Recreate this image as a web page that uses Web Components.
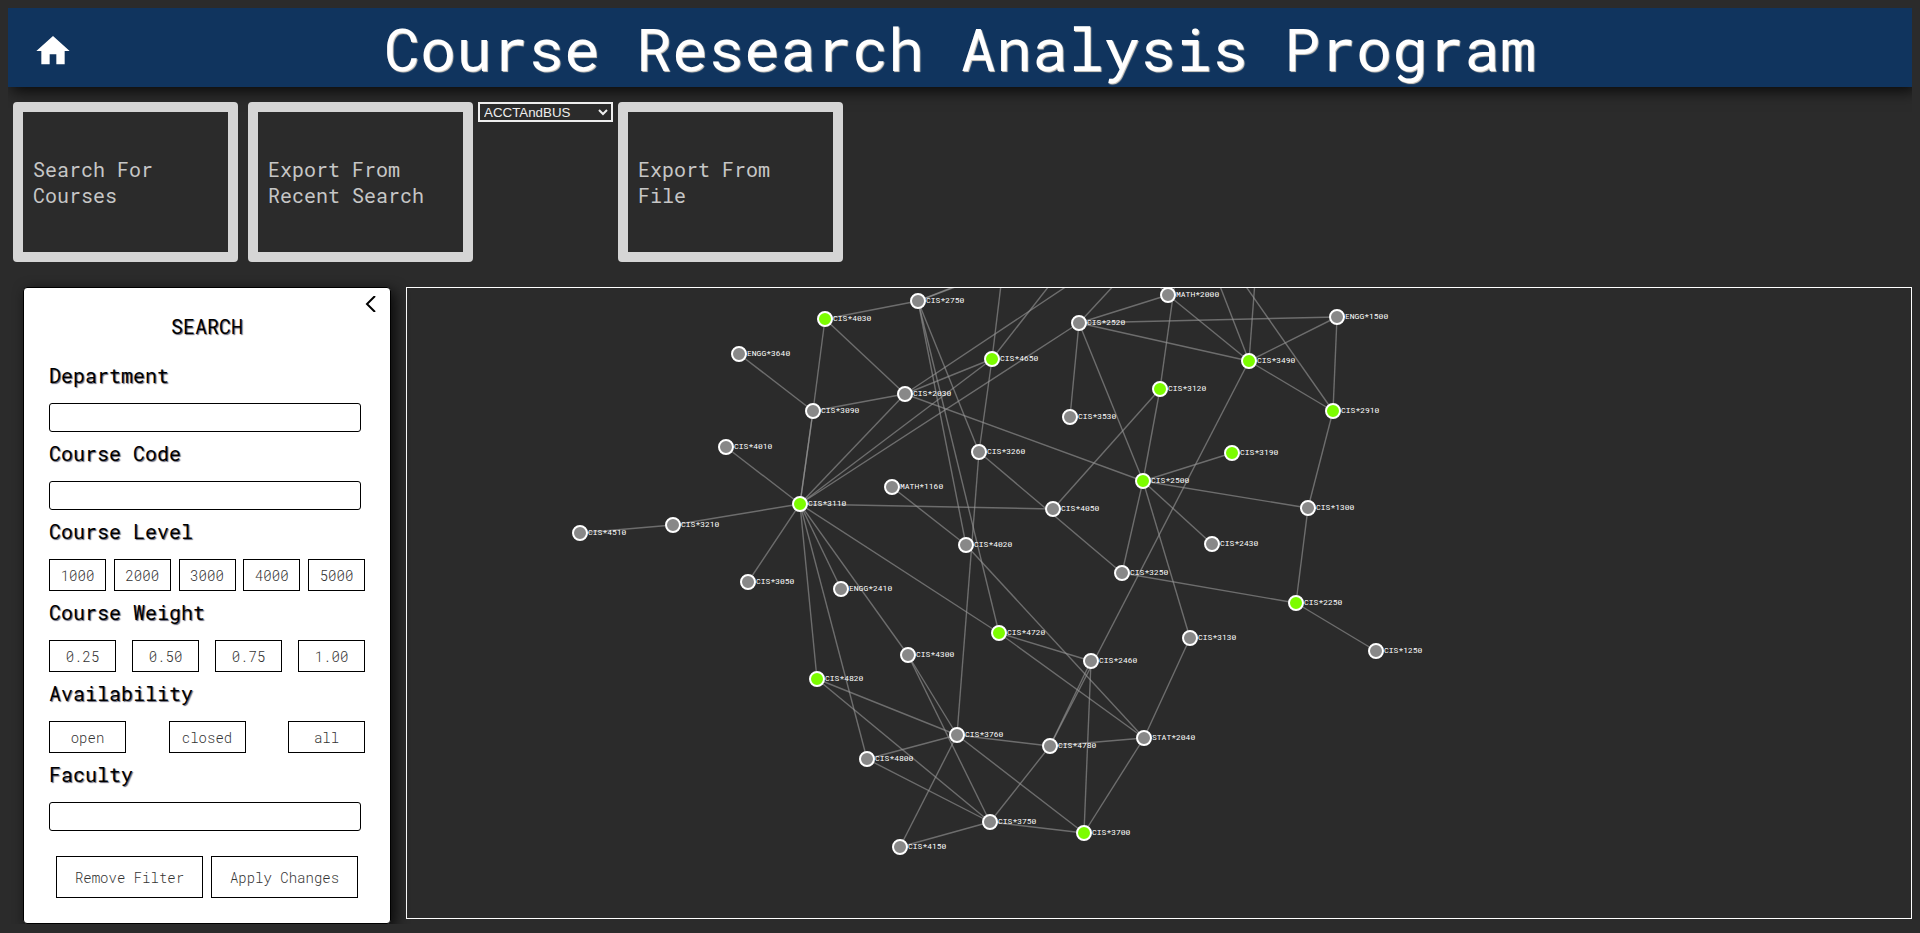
<!DOCTYPE html>
<html lang="en">
<head>
<meta charset="utf-8">
<title>Course Research Analysis Program</title>
<style>
  body { margin: 8px; background: #2b2b2b; font-family: "Roboto Mono", "Liberation Mono", monospace; }
</style>
</head>
<body>
<course-app></course-app>
<script>
const define = (name, html, setup) => {
  const template = document.createElement('template');
  template.innerHTML = html;
  customElements.define(name, class extends HTMLElement {
    constructor() {
      super();
      this.attachShadow({ mode: 'open' }).append(template.content.cloneNode(true));
    }
    connectedCallback() { if (setup) setup(this, this.shadowRoot); }
  });
};

/* Top banner with home link */
define('app-header', `
<style>
  :host { display: grid; grid-template-columns: 90px 1fr 90px; align-items: center; min-height: 79px;
    background: #10345e; color: #fff; box-shadow: 4px 4px 14px rgba(0,0,0,.8); }
  a { justify-self: center; display: flex; padding-top: 6px; color: inherit; }
  h1 { margin: 0; text-align: center; font: 400 60px/79px "Roboto Mono", "Liberation Mono", monospace;
    text-shadow: 1px 1px 1px #d8d0c4; }
</style>
<a href="#" aria-label="Home"><svg width="40" height="40" viewBox="0 0 24 24" fill="currentColor"><path d="M10 20v-6h4v6h5v-8h3L12 3 2 12h3v8z"/></svg></a>
<h1><slot></slot></h1>`);

/* Large framed action button */
define('action-card', `
<style>
  :host { display: block; margin: 5px; }
  button { box-sizing: border-box; width: 225px; height: 160px; padding: 0 10px; border: 10px solid #d5d5d5;
    border-radius: 4px; background: transparent; color: #c6c6c6; font: 20px/26px "Roboto Mono", "Liberation Mono", monospace;
    text-align: left; }
</style>
<button type="button"><slot></slot></button>`);

define('file-picker', `
<style>
  :host { display: block; margin-top: 5px; }
  select { display: block; box-sizing: border-box; width: 135px; height: 20px; padding: 0; border: 2px solid #eee;
    border-radius: 0; background: #2b2b2b; color: #eee; font-family: "Liberation Sans", sans-serif; }
</style>
<select aria-label="File"><option>ACCTAndBUS</option></select>`);

/* Labelled text box */
define('text-field', `
<style>
  :host { display: block; }
  label { display: block; font: 400 20px/26px "Roboto Mono", "Liberation Mono", monospace; text-shadow: 1px 1px 1px #667; margin-bottom: 15px; }
  input { display: block; box-sizing: border-box; width: calc(100% - 4px); height: 29px; border: 1px solid #000; border-radius: 3px; background: #fff; }
</style>
<label for="box"></label><input id="box" type="text">`,
(host, root) => { root.querySelector('label').textContent = host.getAttribute('label'); });

/* Labelled row of equally sized filter buttons */
define('option-row', `
<style>
  :host { display: block; }
  h3 { margin: 0 0 15px; font: 400 20px/26px "Roboto Mono", "Liberation Mono", monospace; text-shadow: 1px 1px 1px #667; }
  div { display: flex; justify-content: space-between; }
  button { box-sizing: border-box; width: var(--option-width); height: 32px; padding: 2px 0 0; border: 1px solid #000; border-radius: 0;
    background: #fff; color: #333; font: 300 14px/18px "Roboto Mono", "Liberation Mono", monospace; }
</style>
<h3 id="name"></h3><div role="group" aria-labelledby="name"></div>`,
(host, root) => {
  root.querySelector('h3').textContent = host.getAttribute('label');
  root.querySelector('div').replaceChildren(...host.getAttribute('options').split(' ').map(text => {
    const button = document.createElement('button');
    button.type = 'button';
    button.textContent = text;
    return button;
  }));
});

define('search-panel', `
<style>
  :host { display: block; position: relative; box-sizing: border-box; flex: 0 0 368px; padding: 25px; border: 1px solid #000;
    border-radius: 4px; background: #fff; color: #000; box-shadow: 4px 4px 14px rgba(0,0,0,.8); }
  .close { position: absolute; top: 8px; right: 13px; display: flex; padding: 0; border: 0; background: none; color: #000; }
  h2 { margin: 0 0 23px; font: 400 20px/26px "Roboto Mono", "Liberation Mono", monospace; text-align: center; text-shadow: 1px 1px 1px #667; }
  form { display: flex; flex-direction: column; gap: 8px; }
  .levels { --option-width: 57px; }
  .weights { --option-width: 67px; }
  .status { --option-width: 77px; }
  footer { display: flex; justify-content: center; gap: 8px; margin-top: 17px; }
  footer button { box-sizing: border-box; width: 147px; height: 42px; padding: 2px 0 0; border: 1px solid #000; border-radius: 0;
    background: #fff; color: #333; font: 300 14px/18px "Roboto Mono", "Liberation Mono", monospace; }
</style>
<button class="close" type="button" aria-label="Close"><svg width="12" height="16" viewBox="0 0 12 16" fill="none" stroke="currentColor" stroke-width="2"><path d="M10 0L2 8l8 8"/></svg></button>
<h2>SEARCH</h2>
<form>
  <text-field label="Department"></text-field>
  <text-field label="Course Code"></text-field>
  <option-row class="levels" label="Course Level" options="1000 2000 3000 4000 5000"></option-row>
  <option-row class="weights" label="Course Weight" options="0.25 0.50 0.75 1.00"></option-row>
  <option-row class="status" label="Availability" options="open closed all"></option-row>
  <text-field label="Faculty"></text-field>
  <footer><button type="button">Remove Filter</button><button type="button">Apply Changes</button></footer>
</form>`);

/* Course prerequisites: name, x, y and, for open courses, a flag */
const NODES = `CIS*2750 918 301,CIS*4030 825 319 open,ENGG*3640 739 354,CIS*4650 992 359 open,CIS*2030 905 394,CIS*3090 813 411,
CIS*4010 726 447,CIS*3260 979 452,MATH*1160 892 487,CIS*3110 800 504 open,CIS*3210 673 525,CIS*4510 580 533,CIS*4020 966 545,
MATH*2000 1168 295,CIS*2520 1079 323,ENGG*1500 1337 317,CIS*3490 1249 361 open,CIS*3120 1160 389 open,CIS*3530 1070 417,
CIS*2910 1333 411 open,CIS*3190 1232 453 open,CIS*2500 1143 481 open,CIS*4050 1053 509,CIS*1300 1308 508,CIS*2430 1212 544,
CIS*3250 1122 573,CIS*3050 748 582,ENGG*2410 841 589,CIS*4720 999 633 open,CIS*4300 908 655,CIS*4820 817 679 open,
CIS*3760 957 735,CIS*4800 867 759,CIS*3750 990 822,CIS*4150 900 847,CIS*2460 1091 661,CIS*2250 1296 603 open,CIS*3130 1190 638,
CIS*1250 1376 651,STAT*2040 1144 738,CIS*4780 1050 746,CIS*3700 1084 833 open`;
/* Pairs of course numbers; "x:y" is a point above the visible area */
const EDGES = `2750-4030 4030-3090 4030-2030 3640-3090 3090-2030 3090-3110 3090-3110 4650-2030 4650-3110 4650-3260 4650-1003:268
4650-1063:268 2030-1094:268 2030-3110 2030-2500 2520-3110 2750-1001:268 2750-1006:268 2750-3260 2750-4020 2750-4720 3260-3760
3260-3250 1160-4020 4020-2040 4010-3110 3110-3210 3210-4510 3110-3050 3110-2410 3110-4300 3110-4800 3110-4820 3110-4720
3110-4050 4050-3120 3120-1177:268 2520-2000 2520-1500 2520-3490 2520-3530 2520-2500 2520-1130:268 2000-1141:268 2000-3490
3490-1213:268 3490-1256:268 3490-1500 3490-2910 3490-4780 2460-4780 2910-1233:268 2910-1500 2910-1300 1300-2250 1300-2500
2500-3190 2500-2430 2500-3250 2500-3130 2500-3120 3250-2250 2250-1250 3130-2040 2040-3700 2040-4780 2040-4720 4720-2460
2460-3700 4780-3760 4780-3750 3760-3700 3750-3700 3760-4800 3760-4820 3750-4820 3750-4800 3750-4150 3760-4150 4300-3760 4300-3750`;

define('course-graph', `
<style>
  :host { display: block; box-sizing: border-box; flex: 1; min-width: 0; border: 1px solid #fff; margin-bottom: 5px; overflow: hidden; }
  svg { display: block; width: 100%; height: 100%; }
  line { stroke: #999; stroke-opacity: .6; stroke-width: 1.4; }
  circle { fill: #888; stroke: #fff; stroke-width: 2; }
  .open { fill: #7cfc00; }
  text { fill: #fff; font: 8px "Roboto Mono", "Liberation Mono", monospace; }
</style>
<svg role="img" aria-label="Course prerequisite graph"><g transform="translate(-407 -288)"></g></svg>`,
(host, root) => {
  const nodes = NODES.split(',').map(row => {
    const [name, x, y, state] = row.trim().split(' ');
    return { name, x: +x, y: +y, state };
  });
  const point = ref => {
    if (ref.includes(':')) { const [x, y] = ref.split(':'); return { x, y }; }
    return nodes.find(node => node.name.endsWith(ref));
  };
  const group = root.querySelector('g');
  group.innerHTML = EDGES.split(/\s+/).map(edge => {
    const [a, b] = edge.split('-').map(point);
    return `<line x1="${a.x}" y1="${a.y}" x2="${b.x}" y2="${b.y}"/>`;
  }).join('') + nodes.map(n =>
    `<circle class="${n.state || ''}" cx="${n.x}" cy="${n.y}" r="7"/><text x="${n.x + 8}" y="${n.y + 2}">${n.name}</text>`
  ).join('');
});

define('course-app', `
<style>
  :host { display: block; }
  nav { display: flex; align-items: flex-start; margin-top: 10px; }
  main { display: flex; gap: 15px; margin: 20px 0 0 15px; }
</style>
<app-header>Course Research Analysis Program</app-header>
<nav aria-label="Actions">
  <action-card>Search For Courses</action-card>
  <action-card>Export From Recent Search</action-card>
  <file-picker></file-picker>
  <action-card>Export From File</action-card>
</nav>
<main><search-panel></search-panel><course-graph></course-graph></main>`);
</script>
</body>
</html>
